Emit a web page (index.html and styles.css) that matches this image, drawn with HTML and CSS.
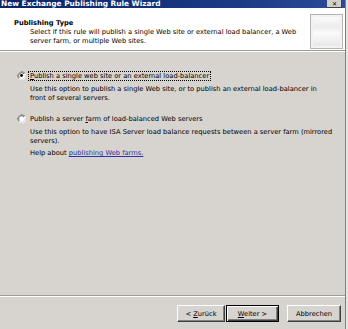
FILE: index.html
```html
<!DOCTYPE html>
<html>
<head>
<meta charset="utf-8">
<link rel="stylesheet" href="styles.css">
</head>
<body>
<div class="window">
  <div class="titlebar">
    <span class="title">New Exchange Publishing Rule Wizard</span>
    <span class="close">&#x2715;</span>
  </div>
  <div class="header">
    <div class="header-text">
      <div class="h-title">Publishing Type</div>
      <div class="h-desc">Select if this rule will publish a single Web site or external load balancer, a Web server farm, or multiple Web sites.</div>
    </div>
    <div class="h-icon"><div class="h-icon-inner"></div></div>
  </div>
  <div class="sep"></div>
  <div class="content">
    <div class="option">
      <div class="opt-row">
        <svg class="radio" width="9" height="9" viewBox="0 0 9 9">
          <path d="M8 2.2A4 4 0 0 0 1.8 7.6" fill="none" stroke="#808080" stroke-width="1"/>
          <circle cx="4.5" cy="4.5" r="3.2" fill="#fff"/>
          <path d="M1.8 7.6A4 4 0 0 0 8 2.2" fill="none" stroke="#f4f4f4" stroke-width="1"/>
          <path d="M7 2.8A3 3 0 0 0 2.3 6.6" fill="none" stroke="#404040" stroke-width="0.8"/>
          <circle cx="4.5" cy="4.5" r="1.4" fill="#000"/>
        </svg>
        <span class="label focus"><u>P</u>ublish a single web site or an external load-balancer</span>
      </div>
      <div class="opt-desc">Use this option to publish a single Web site, or to publish an external load-balancer in front of several servers.</div>
    </div>
    <div class="option second">
      <div class="opt-row">
        <svg class="radio" width="9" height="9" viewBox="0 0 9 9">
          <path d="M8 2.2A4 4 0 0 0 1.8 7.6" fill="none" stroke="#808080" stroke-width="1"/>
          <circle cx="4.5" cy="4.5" r="3.2" fill="#fff"/>
          <path d="M1.8 7.6A4 4 0 0 0 8 2.2" fill="none" stroke="#f4f4f4" stroke-width="1"/>
          <path d="M7 2.8A3 3 0 0 0 2.3 6.6" fill="none" stroke="#404040" stroke-width="0.8"/>
        </svg>
        <span class="label">Publish a server <u>f</u>arm of load-balanced Web servers</span>
      </div>
      <div class="opt-desc">Use this option to have ISA Server load balance requests between a server farm (mirrored servers).</div>
      <div class="help">Help about <a class="link" href="#">publishing Web farms.</a></div>
    </div>
  </div>
  <div class="sep"></div>
  <div class="footer">
    <button class="btn">&lt; <u>Z</u>urück</button>
    <button class="btn default"><u>W</u>eiter &gt;</button>
    <button class="btn cancel">Abbrechen</button>
  </div>
</div>
</body>
</html>
```
FILE: styles.css
```css
html, body {
  margin: 0;
  padding: 0;
  background: #e6e4e0;
}
body {
  width: 348px;
  height: 329px;
  overflow: hidden;
  font-family: "DejaVu Sans", "Liberation Sans", sans-serif;
  font-size: 6.7px;
  color: #000;
}
.window {
  width: 345px;
  height: 329px;
  background: #d7d3cf;
  border-right: 1px solid #808080;
  display: flex;
  flex-direction: column;
}
.titlebar {
  height: 8px;
  flex: none;
  background: linear-gradient(to right, #0a246a 0%, #1c3a86 70%, #2c4c9a 100%);
  display: flex;
  align-items: center;
  justify-content: space-between;
  overflow: hidden;
}
.title {
  color: #fff;
  font-weight: bold;
  font-size: 7.4px;
  line-height: 8px;
  padding-left: 1px;
}
.close {
  width: 15px;
  height: 8px;
  background: #d4d0c8;
  margin-right: 3px;
  font-size: 6px;
  line-height: 8px;
  font-weight: bold;
  text-align: center;
  color: #000;
  box-shadow: inset -1px -1px #404040;
}
.header {
  height: 42px;
  flex: none;
  background: #fff;
  display: flex;
  justify-content: space-between;
}
.header-text {
  padding: 11px 0 0 14px;
}
.h-title {
  font-weight: bold;
  line-height: 9px;
}
.h-desc {
  padding-left: 16px;
  line-height: 9px;
  width: 272px;
}
.h-icon {
  width: 33px;
  height: 35px;
  margin: 6px 2px 0 0;
  border: 1px solid #b8b4b0;
  background: #f2f2f2;
  box-sizing: border-box;
  padding: 2px;
}
.h-icon-inner {
  width: 100%;
  height: 100%;
  background:
    linear-gradient(to bottom, #fafafa 0%, #ececec 35%, #fbfbfb 55%, #e8e8e8 100%);
}
.sep {
  height: 1px;
  flex: none;
  background: #a09c98;
  border-bottom: 1px solid #fff;
}
.content {
  flex: 1;
  padding: 19px 0 0 17px;
}
.option {
  line-height: 8.5px;
}
.opt-row {
  display: flex;
  align-items: center;
  gap: 3px;
}
.radio {
  flex: none;
}
.label {
  padding: 0 1px;
  line-height: 8px;
}
.focus {
  outline: 1px dotted #000;
}
.opt-desc {
  padding-left: 13px;
  margin-top: 5px;
  width: 304px;
}
.second {
  margin-top: 12px;
}
.help {
  padding-left: 13px;
  margin-top: 4px;
}
.link {
  color: #3030a8;
  text-decoration: underline;
}
.footer {
  height: 32px;
  flex: none;
  box-sizing: border-box;
  display: flex;
  justify-content: flex-end;
  align-items: flex-start;
  padding: 8px 4px 0 0;
  gap: 1px;
}
.btn {
  font-family: inherit;
  font-size: 6.7px;
  height: 17px;
  width: 48px;
  padding: 0;
  margin: 0;
  background: #d7d3cf;
  color: #000;
  border: 1px solid;
  border-color: #fff #404040 #404040 #fff;
  box-shadow: inset -1px -1px #808080;
}
.default {
  width: 53px;
  border: 1px solid #000;
  box-shadow: inset 1px 1px #fff, inset -1px -1px #404040, inset -2px -2px #808080;
}
.cancel {
  margin-left: 7px;
  width: 54px;
}
```
